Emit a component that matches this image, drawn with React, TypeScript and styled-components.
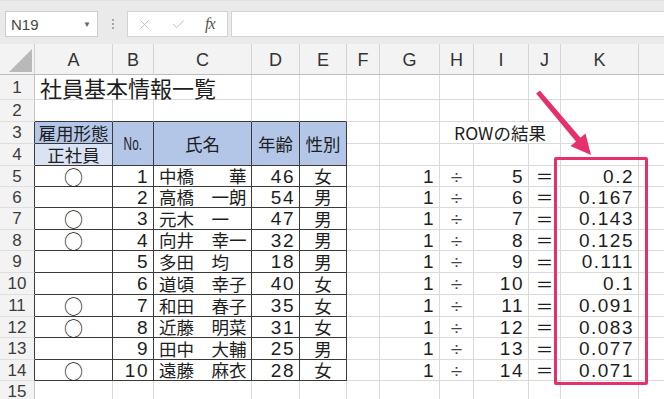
import React from 'react';
import styled, { createGlobalStyle } from 'styled-components';
import { X, Check } from 'lucide-react';

const GlobalStyle = createGlobalStyle`
  html, body { margin: 0; padding: 0; background: #fff; }
  body { font-family: "Noto Sans CJK JP", sans-serif; }
  * { box-sizing: border-box; }
`;

const COLS = [35, 78, 41, 98, 48, 47, 33, 60, 34, 55, 32, 78, 80];
const LETTERS = ['A', 'B', 'C', 'D', 'E', 'F', 'G', 'H', 'I', 'J', 'K', ''];
const ROWS = [31, 25, 22, 22, 22, 21, 21, 22, 21, 22, 22, 22, 21, 22, 21, 22];

const GRID = '#dadada';
const FRAME = '#3a3a3a';
const BLUE = '#b4c6e7';
const LIGHT_BLUE = '#dae3f3';
const PINK = '#e5306b';

const Page = styled.div`
  position: relative;
  width: 664px;
  height: 399px;
  overflow: hidden;
  background: #fff;
`;

const TopBar = styled.div`
  height: 44px;
  background: #eaeaea;
  display: flex;
  align-items: flex-start;
  padding-top: 10px;
  border-top: 1px solid #e2e2e2;
`;

const NameBox = styled.div`
  margin-left: 5px;
  width: 93px;
  height: 26px;
  background: #fff;
  border: 1px solid #cdcdcd;
  display: flex;
  align-items: center;
  justify-content: space-between;
  padding: 0 6px 0 5px;
  font-family: "Liberation Sans", Arial, sans-serif;
  font-size: 15px;
  color: #444;
`;

const Caret = styled.span`
  font-size: 8px;
  color: #666;
`;

const Grip = styled.div`
  width: 29px;
  height: 26px;
  display: flex;
  flex-direction: column;
  align-items: center;
  justify-content: center;
  gap: 2px;
`;

const GripDot = styled.span`
  width: 2px;
  height: 2px;
  background: #a8a8a8;
`;

const FxBox = styled.div`
  width: 101px;
  height: 26px;
  background: #fff;
  border: 1px solid #d2d2d2;
  display: flex;
  align-items: center;
  padding-left: 9px;
  gap: 19px;
  color: #b8b8b8;
`;

const Fx = styled.span`
  font-family: "Liberation Serif", "Times New Roman", serif;
  font-style: italic;
  font-size: 16px;
  color: #555;
  letter-spacing: -1px;
`;

const FormulaInput = styled.div`
  flex: 1;
  margin-left: 3px;
  height: 26px;
  background: #fff;
  border: 1px solid #d2d2d2;
  border-right: none;
`;

const Sheet = styled.div`
  display: grid;
  grid-template-columns: ${COLS.map((c) => `${c}px`).join(' ')};
  grid-template-rows: ${ROWS.map((r) => `${r}px`).join(' ')};
`;

const Corner = styled.div`
  grid-column: 1;
  grid-row: 1;
  background: #f3f3f3;
  border-right: 1px solid #cfcfcf;
  border-bottom: 1px solid #bdbdbd;
  display: flex;
  align-items: flex-end;
  justify-content: flex-end;
  padding: 0 2px 2px 0;
`;

const Triangle = styled.span`
  width: 0;
  height: 0;
  border-left: 23px solid transparent;
  border-bottom: 23px solid #b9b9b9;
`;

const ColHead = styled.div<{ $col: number }>`
  grid-column: ${(p) => p.$col};
  grid-row: 1;
  background: #f3f3f3;
  border-right: 1px solid #d3d3d3;
  border-bottom: 1px solid #bdbdbd;
  display: flex;
  align-items: center;
  justify-content: center;
  padding-top: 2px;
  line-height: 1;
  font-family: "Liberation Sans", Arial, sans-serif;
  font-size: 18px;
  color: #333;
`;

const RowHead = styled.div<{ $row: number; $edge?: boolean }>`
  grid-column: 1;
  grid-row: ${(p) => p.$row};
  background: #f3f3f3;
  border-right: 1px solid ${(p) => (p.$edge ? FRAME : '#c4c4c4')};
  border-bottom: 1px solid #dedede;
  display: flex;
  align-items: center;
  justify-content: center;
  line-height: 1;
  font-family: "Liberation Sans", Arial, sans-serif;
  font-size: 17px;
  color: #3c3c3c;
`;

type Kind = 'jp' | 'num' | 'title' | 'op' | 'mark';

const FONT_SIZE: Record<Kind, string> = {
  jp: '17.5px',
  num: '19px',
  title: '22px',
  op: '21px',
  mark: '19px',
};

const Cell = styled.div<{
  $col: number;
  $row: number;
  $cs: number;
  $rs: number;
  $bg: string;
  $align: 'left' | 'center' | 'right';
  $kind: Kind;
  $frameR: boolean;
  $frameB: boolean;
}>`
  grid-column: ${(p) => p.$col} / span ${(p) => p.$cs};
  grid-row: ${(p) => p.$row} / span ${(p) => p.$rs};
  background: ${(p) => p.$bg};
  border-right: 1px solid ${(p) => (p.$frameR ? FRAME : GRID)};
  border-bottom: 1px solid ${(p) => (p.$frameB ? FRAME : GRID)};
  display: flex;
  align-items: center;
  justify-content: ${(p) =>
    p.$align === 'left' ? 'flex-start' : p.$align === 'right' ? 'flex-end' : 'center'};
  padding: ${(p) => (p.$align === 'left' ? '0 0 0 5px' : p.$align === 'right' ? '0 4px 0 0' : '0')};
  white-space: nowrap;
  overflow: visible;
  line-height: 1;
  color: ${(p) => (p.$kind === 'op' ? '#444' : '#1e1e1e')};
  font-family: ${(p) =>
    p.$kind === 'num' || p.$kind === 'op'
      ? '"Liberation Sans", Arial, sans-serif'
      : '"Noto Sans CJK JP", sans-serif'};
  font-size: ${(p) => FONT_SIZE[p.$kind]};
  letter-spacing: ${(p) => (p.$kind === 'num' ? '1.5px' : '0')};
`;

const Narrow = styled.span`
  display: inline-block;
  font-family: "Liberation Sans", Arial, sans-serif;
  font-size: 19px;
  transform: scaleX(0.62);
`;

const Overlay = styled.svg`
  position: absolute;
  left: 0;
  top: 0;
  pointer-events: none;
`;

const Highlight = styled.div`
  position: absolute;
  left: 554px;
  top: 157px;
  width: 94px;
  height: 228px;
  border: 3px solid ${PINK};
  border-radius: 2px;
  pointer-events: none;
`;

type Spec = {
  r: number;
  c: number;
  rs?: number;
  cs?: number;
  text?: React.ReactNode;
  align?: 'left' | 'center' | 'right';
  bg?: string;
  kind?: Kind;
};

const people: [boolean, string, number, string][] = [
  [true, '中橋　　華', 46, '女'],
  [false, '高橋　一朗', 54, '男'],
  [true, '元木　一', 47, '男'],
  [true, '向井　幸一', 32, '男'],
  [false, '多田　均', 18, '男'],
  [false, '道頃　幸子', 40, '女'],
  [true, '和田　春子', 35, '女'],
  [true, '近藤　明菜', 31, '女'],
  [false, '田中　大輔', 25, '男'],
  [true, '遠藤　麻衣', 28, '女'],
];

const results = ['0.2', '0.167', '0.143', '0.125', '0.111', '0.1', '0.091', '0.083', '0.077', '0.071'];

const specs: Spec[] = [
  { r: 1, c: 1, cs: 3, text: '社員基本情報一覧', align: 'left', kind: 'title' },
  { r: 3, c: 1, text: '雇用形態', align: 'center', bg: BLUE },
  { r: 4, c: 1, text: '正社員', align: 'center', bg: LIGHT_BLUE },
  { r: 3, c: 2, rs: 2, text: <Narrow>No.</Narrow>, align: 'center', bg: BLUE },
  { r: 3, c: 3, rs: 2, text: '氏名', align: 'center', bg: BLUE },
  { r: 3, c: 4, rs: 2, text: '年齢', align: 'center', bg: BLUE },
  { r: 3, c: 5, rs: 2, text: '性別', align: 'center', bg: BLUE },
  { r: 3, c: 8, cs: 3, text: 'ROWの結果', align: 'center' },
];

people.forEach(([regular, name, age, sex], i) => {
  const r = 5 + i;
  specs.push(
    { r, c: 1, text: regular ? '○' : '', align: 'center', kind: 'mark' },
    { r, c: 2, text: String(i + 1), align: 'right', kind: 'num' },
    { r, c: 3, text: name, align: 'left' },
    { r, c: 4, text: String(age), align: 'right', kind: 'num' },
    { r, c: 5, text: sex, align: 'center' },
    { r, c: 7, text: '1', align: 'right', kind: 'num' },
    { r, c: 8, text: '÷', align: 'center', kind: 'op' },
    { r, c: 9, text: String(r), align: 'right', kind: 'num' },
    { r, c: 10, text: '＝', align: 'center' },
    { r, c: 11, text: results[i], align: 'right', kind: 'num' },
  );
});

const covered = new Set<string>();
specs.forEach((s) => {
  for (let dr = 0; dr < (s.rs ?? 1); dr++)
    for (let dc = 0; dc < (s.cs ?? 1); dc++) covered.add(`${s.r + dr}:${s.c + dc}`);
});
for (let r = 1; r <= 15; r++)
  for (let c = 1; c <= 12; c++) if (!covered.has(`${r}:${c}`)) specs.push({ r, c });

const inTable = (r: number, c: number) => r >= 3 && r <= 14 && c >= 1 && c <= 5;

export default function App() {
  return (
    <Page>
      <GlobalStyle />
      <TopBar>
        <NameBox>
          N19
          <Caret>▼</Caret>
        </NameBox>
        <Grip>
          <GripDot />
          <GripDot />
          <GripDot />
        </Grip>
        <FxBox>
          <X size={15} strokeWidth={1.4} />
          <Check size={15} strokeWidth={1.4} />
          <Fx>fx</Fx>
        </FxBox>
        <FormulaInput />
      </TopBar>
      <Sheet>
        <Corner>
          <Triangle />
        </Corner>
        {LETTERS.map((l, i) => (
          <ColHead key={i} $col={i + 2}>
            {l}
          </ColHead>
        ))}
        {Array.from({ length: 15 }, (_, i) => (
          <RowHead key={i} $row={i + 2} $edge={i + 1 >= 3 && i + 1 <= 14}>
            {i + 1}
          </RowHead>
        ))}
        {specs.map((s) => {
          const lastR = s.r + (s.rs ?? 1) - 1;
          const lastC = s.c + (s.cs ?? 1) - 1;
          const frameR = inTable(s.r, lastC);
          const frameB = inTable(lastR, s.c) || (lastR === 2 && s.c <= 5);
          return (
            <Cell
              key={`${s.r}-${s.c}`}
              $col={s.c + 1}
              $row={s.r + 1}
              $cs={s.cs ?? 1}
              $rs={s.rs ?? 1}
              $bg={s.bg ?? '#fff'}
              $align={s.align ?? 'left'}
              $kind={s.kind ?? 'jp'}
              $frameR={frameR}
              $frameB={frameB}
            >
              {s.text}
            </Cell>
          );
        })}
      </Sheet>
      <Highlight />
      <Overlay width={664} height={399} viewBox="0 0 664 399">
        <polygon
          points="536.1,93.6 539.9,90.4 580.5,137.7 585.5,133.5 591,155 570.5,146 576,141.5"
          fill={PINK}
        />
      </Overlay>
    </Page>
  );
}
